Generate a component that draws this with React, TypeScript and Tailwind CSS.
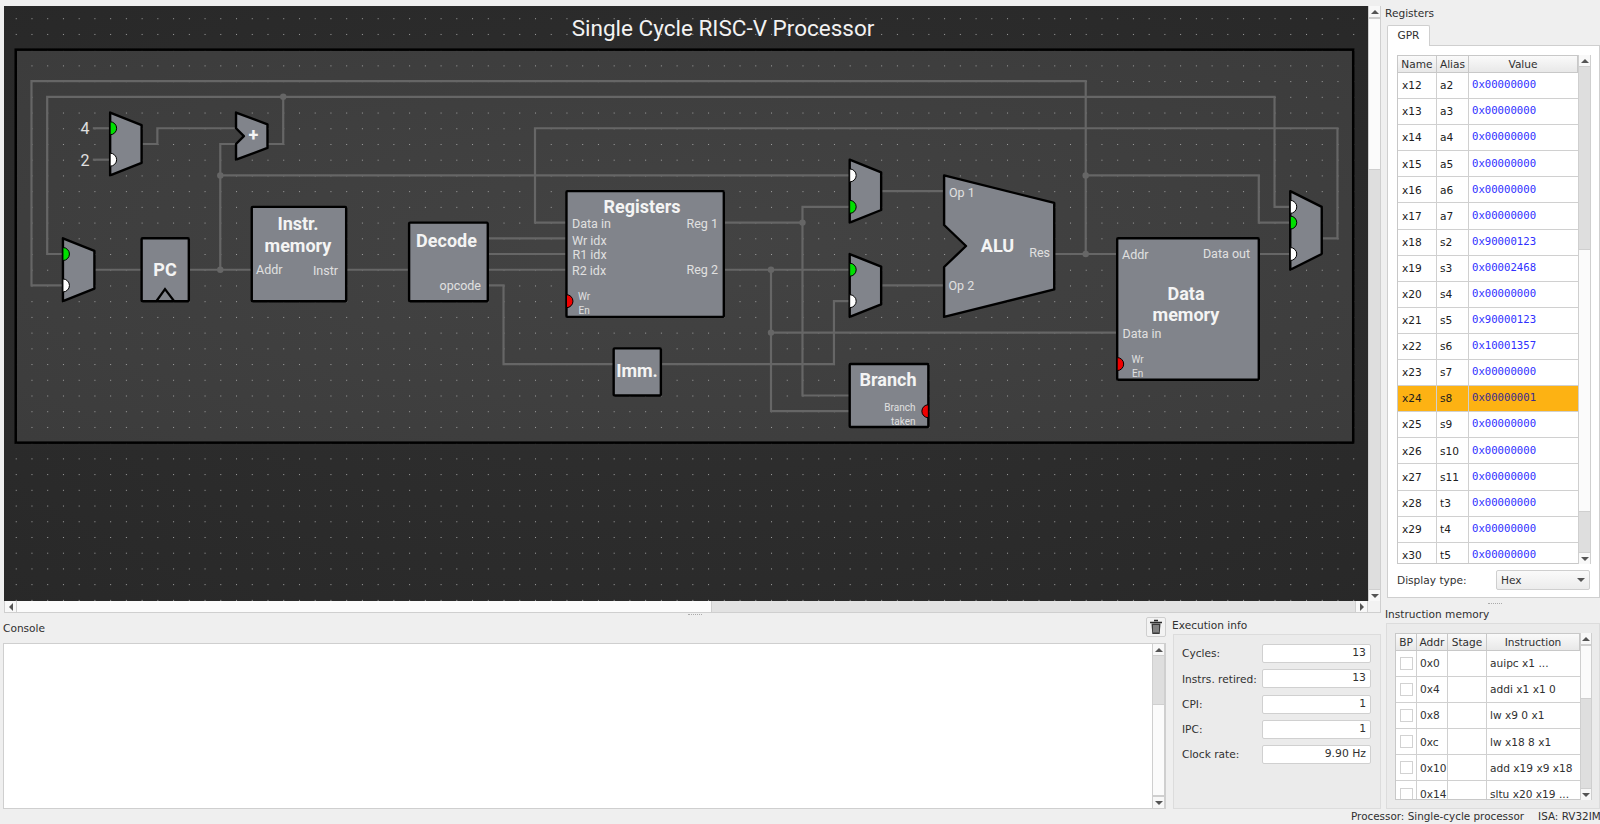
import React from "react";

const GX = 15.735;
const GY = 15.72;
const X = (n: number) => n * GX;
const Y = (n: number) => n * GY + 2.5;

const wires: [number, number][][] = [
  [[4, 18], [2, 18], [2, 5], [69, 5], [69, 16]],
  [[4, 16], [3, 16], [3, 6], [81, 6], [81, 13], [82, 13]],
  [[18, 6], [18, 9], [17, 9]],
  [[9, 9], [10, 9], [10, 8], [15.4, 8]],
  [[15.4, 9], [14, 9], [14, 17]],
  [[6, 17], [9, 17]],
  [[12, 17], [16, 17]],
  [[22, 17], [26, 17]],
  [[14, 11], [54, 11]],
  [[31, 15], [36, 15]],
  [[31, 16], [36, 16]],
  [[31, 17], [36, 17]],
  [[31, 18], [32, 18], [32, 23], [39, 23]],
  [[42, 23], [53, 23], [53, 19], [54, 19]],
  [[36, 14], [34, 14], [34, 8], [85, 8], [85, 15], [84, 15]],
  [[46, 14], [51, 14]],
  [[54, 13], [51, 13], [51, 25], [54, 25]],
  [[46, 17], [54, 17]],
  [[49, 17], [49, 26], [54, 26]],
  [[49, 21], [71, 21]],
  [[56, 12], [60, 12]],
  [[56, 18], [60, 18]],
  [[67, 16], [71, 16]],
  [[69, 11], [80, 11], [80, 14], [82, 14]],
  [[80, 16], [82, 16]],
  [[5.9, 8], [7, 8]],
  [[5.9, 10], [7, 10]],
];

const junctions: [number, number][] = [
  [18, 6], [14, 11], [14, 17], [51, 14], [49, 17], [49, 21], [69, 11], [69, 16],
];

const toPts = (w: [number, number][]) => w.map(([a, b]) => `${X(a)},${Y(b)}`).join(" ");

function Mux({ x, y, h }: { x: number; y: number; h: number }) {
  const i = h * 0.2;
  return (
    <polygon
      points={`${X(x)},${Y(y)} ${X(x + 2)},${Y(y + i)} ${X(x + 2)},${Y(y + h - i)} ${X(x)},${Y(y + h)}`}
      fill="#81848b"
      stroke="#000"
      strokeWidth="2.4"
      strokeLinejoin="round"
    />
  );
}

function Block({ x1, y1, x2, y2 }: { x1: number; y1: number; x2: number; y2: number }) {
  return (
    <rect x={X(x1)} y={Y(y1)} width={X(x2) - X(x1)} height={Y(y2) - Y(y1)} fill="#81848b" stroke="#000" strokeWidth="2.4" rx="1" />
  );
}

function Port({ x, y, c, flip }: { x: number; y: number; c: string; flip?: boolean }) {
  const r = 6.5;
  const px = X(x);
  const py = Y(y);
  return (
    <path d={`M${px},${py - r} A${r},${r} 0 0 ${flip ? 0 : 1} ${px},${py + r} Z`} fill={c} stroke="#000" strokeWidth="1" />
  );
}

function L({ x, y, s = 12.5, a = "start", b, children }: { x: number; y: number; s?: number; a?: "start" | "middle" | "end"; b?: boolean; children: React.ReactNode }) {
  return (
    <text x={x} y={y} fontSize={s} textAnchor={a} fontWeight={b ? 700 : 400} fill={b ? "#f4f4f4" : "#e0e0e0"} fontFamily="Roboto, sans-serif">
      {children}
    </text>
  );
}

function Diagram() {
  return (
    <svg width="1364" height="595" viewBox="4 6 1364 595" className="block">
      <defs>
        <radialGradient id="outer" cx="50%" cy="50%" r="75%">
          <stop offset="0%" stopColor="#303030" />
          <stop offset="100%" stopColor="#282828" />
        </radialGradient>
        <radialGradient id="inner" cx="50%" cy="50%" r="70%">
          <stop offset="0%" stopColor="#434343" />
          <stop offset="100%" stopColor="#3c3c3c" />
        </radialGradient>
        <pattern id="dots" patternUnits="userSpaceOnUse" x="0" y="2.5" width={GX} height={GY}>
          <rect x="0" y="0" width="1" height="1" fill="#a0a0a0" />
        </pattern>
      </defs>
      <rect x="4" y="6" width="1364" height="595" fill="url(#outer)" />
      <rect x={X(1)} y={Y(3)} width={X(86) - X(1)} height={Y(28) - Y(3)} fill="url(#inner)" />
      <rect x="4" y="6" width="1364" height="595" fill="url(#dots)" />
      <rect x={X(1)} y={Y(3)} width={X(86) - X(1)} height={Y(28) - Y(3)} fill="none" stroke="#000" strokeWidth="2.5" />

      <text x="723" y="35.5" fontSize="22.5" textAnchor="middle" fill="#f2f2f2" fontFamily="Roboto, sans-serif">
        Single Cycle RISC-V Processor
      </text>

      {wires.map((w, i) => (
        <polyline key={i} points={toPts(w)} fill="none" stroke="#666666" strokeWidth="2.2" />
      ))}
      {junctions.map(([a, b], i) => (
        <circle key={i} cx={X(a)} cy={Y(b)} r="3.2" fill="#666666" />
      ))}

      <L x={85} y={134} s={16} a="middle">4</L>
      <L x={85} y={165.5} s={16} a="middle">2</L>

      <Mux x={7} y={7} h={4} />
      <Port x={7} y={8} c="#00e000" />
      <Port x={7} y={10} c="#ffffff" />

      <Mux x={4} y={15} h={4} />
      <Port x={4} y={16} c="#00e000" />
      <Port x={4} y={18} c="#ffffff" />

      <polygon
        points={`${X(15)},${Y(7)} ${X(17)},${Y(7.75)} ${X(17)},${Y(9.25)} ${X(15)},${Y(10)} ${X(15)},${Y(9)} ${X(15.5)},${Y(8.5)} ${X(15)},${Y(8)}`}
        fill="#81848b"
        stroke="#000"
        strokeWidth="2.4"
        strokeLinejoin="round"
      />
      <L x={253.5} y={141} s={18} a="middle" b>+</L>

      <Block x1={9} y1={15} x2={12} y2={19} />
      <polyline points={`156.5,301 165,289 174,301`} fill="none" stroke="#000" strokeWidth="2.2" />
      <L x={165} y={276} s={18} a="middle" b>PC</L>

      <Block x1={16} y1={13} x2={22} y2={19} />
      <L x={298} y={230} s={18} a="middle" b>Instr.</L>
      <L x={298} y={252} s={18} a="middle" b>memory</L>
      <L x={256} y={274}>Addr</L>
      <L x={338} y={275} a="end">Instr</L>

      <Block x1={26} y1={14} x2={31} y2={19} />
      <L x={446.5} y={246.5} s={18} a="middle" b>Decode</L>
      <L x={481} y={290} a="end">opcode</L>

      <Block x1={36} y1={12} x2={46} y2={20} />
      <L x={642} y={213} s={18} a="middle" b>Registers</L>
      <L x={572} y={228}>Data in</L>
      <L x={572} y={244.5}>Wr idx</L>
      <L x={572.5} y={259}>R1 idx</L>
      <L x={572} y={275}>R2 idx</L>
      <L x={718} y={228} a="end">Reg 1</L>
      <L x={718} y={274} a="end">Reg 2</L>
      <L x={578} y={300} s={10}>Wr</L>
      <L x={578.5} y={314} s={10}>En</L>
      <Port x={36} y={19} c="#f00000" />

      <Block x1={39} y1={22} x2={42} y2={25} />
      <L x={637} y={376.5} s={18} a="middle" b>Imm.</L>

      <Mux x={54} y={10} h={4} />
      <Port x={54} y={11} c="#ffffff" />
      <Port x={54} y={13} c="#00e000" />

      <Mux x={54} y={16} h={4} />
      <Port x={54} y={17} c="#00e000" />
      <Port x={54} y={19} c="#ffffff" />

      <Block x1={54} y1={23} x2={59} y2={27} />
      <L x={888} y={386} s={18} a="middle" b>Branch</L>
      <L x={915.5} y={410.5} s={10} a="end">Branch</L>
      <L x={915.5} y={425} s={10} a="end">taken</L>
      <Port x={59} y={26} c="#f00000" flip />

      <polygon
        points={`${X(60)},${Y(11)} ${X(67)},${Y(12.75)} ${X(67)},${Y(18.25)} ${X(60)},${Y(20)} ${X(60)},267 966,246 ${X(60)},225`}
        fill="#81848b"
        stroke="#000"
        strokeWidth="2.4"
        strokeLinejoin="round"
      />
      <L x={997.5} y={252} s={18} a="middle" b>ALU</L>
      <L x={949} y={197}>Op 1</L>
      <L x={948.5} y={290}>Op 2</L>
      <L x={1050} y={257} a="end">Res</L>

      <Block x1={71} y1={15} x2={80} y2={24} />
      <L x={1186} y={300} s={18} a="middle" b>Data</L>
      <L x={1186} y={321} s={18} a="middle" b>memory</L>
      <L x={1122} y={259}>Addr</L>
      <L x={1250} y={258} a="end">Data out</L>
      <L x={1122.5} y={338}>Data in</L>
      <L x={1131.5} y={363} s={10}>Wr</L>
      <L x={1132} y={377} s={10}>En</L>
      <Port x={71} y={23} c="#f00000" />

      <Mux x={82} y={12} h={5} />
      <Port x={82} y={13} c="#ffffff" />
      <Port x={82} y={14} c="#00e000" />
      <Port x={82} y={16} c="#ffffff" />
    </svg>
  );
}

function Tri({ d }: { d: "up" | "down" | "left" | "right" }) {
  const p = { up: "0,6 4,2 8,6", down: "0,2 8,2 4,6", left: "6,0 6,8 2,4", right: "2,0 2,8 6,4" }[d];
  return (
    <svg width="8" height="8" viewBox="0 0 8 8" className="block">
      <polygon points={p} fill="#555" />
    </svg>
  );
}

const btnCls = "flex items-center justify-center bg-[#f8f8f8] border-[#cfcfcf] shrink-0";

function VScroll({ before, handle, after, w = "w-[13px]" }: { before: number; handle: number; after: number; w?: string }) {
  return (
    <div className={`${w} h-full shrink-0 flex flex-col border-x border-[#cfcfcf] bg-[#dedede]`}>
      <div className={`${btnCls} h-[12px] border-b`}><Tri d="up" /></div>
      <div className="shrink-0" style={{ height: before }} />
      <div className="bg-[#fbfbfb] border-y border-[#cfcfcf] shrink-0" style={{ height: handle }} />
      <div className="flex-1" style={{ minHeight: after }} />
      <div className={`${btnCls} h-[12px] border-t`}><Tri d="down" /></div>
    </div>
  );
}

const regs: [string, string, string][] = [
  ["x12", "a2", "0x00000000"],
  ["x13", "a3", "0x00000000"],
  ["x14", "a4", "0x00000000"],
  ["x15", "a5", "0x00000000"],
  ["x16", "a6", "0x00000000"],
  ["x17", "a7", "0x00000000"],
  ["x18", "s2", "0x90000123"],
  ["x19", "s3", "0x00002468"],
  ["x20", "s4", "0x00000000"],
  ["x21", "s5", "0x90000123"],
  ["x22", "s6", "0x10001357"],
  ["x23", "s7", "0x00000000"],
  ["x24", "s8", "0x00000001"],
  ["x25", "s9", "0x00000000"],
  ["x26", "s10", "0x00000000"],
  ["x27", "s11", "0x00000000"],
  ["x28", "t3", "0x00000000"],
  ["x29", "t4", "0x00000000"],
  ["x30", "t5", "0x00000000"],
];

const instrs: [string, string][] = [
  ["0x0", "auipc x1 ..."],
  ["0x4", "addi x1 x1 0"],
  ["0x8", "lw x9 0 x1"],
  ["0xc", "lw x18 8 x1"],
  ["0x10", "add x19 x9 x18"],
  ["0x14", "sltu x20 x19 ..."],
];

const headCls = "h-[17px] flex items-center justify-center bg-gradient-to-b from-[#fafafa] to-[#e8e8e8] border-r border-b border-[#c8c8c8] text-[#303030] shrink-0";

function RegisterTable() {
  return (
    <div className="flex h-[509px]">
      <div className="w-[181px] h-full overflow-hidden border-[#c8c8c8] border-y border-l bg-white">
        <div className="flex">
          <div className={`${headCls} w-[39px]`}>Name</div>
          <div className={`${headCls} w-[32px]`}>Alias</div>
          <div className={`${headCls} flex-1`}>Value</div>
        </div>
        {regs.map(([n, a, v]) => {
          const on = n === "x24";
          return (
            <div key={n} className={`flex h-[26.1px] border-b border-[#d0d0d0] ${on ? "bg-[#fdb213]" : "bg-white"}`}>
              <div className="w-[39px] pl-[4px] flex items-center border-r border-[#d0d0d0] text-[#202020] shrink-0">{n}</div>
              <div className="w-[32px] pl-[3px] flex items-center border-r border-[#d0d0d0] text-[#202020] shrink-0">{a}</div>
              <div className={`flex-1 pl-[3px] flex items-center font-['DejaVu_Sans_Mono',monospace] text-[10.65px] ${on ? "text-[#3a2a90]" : "text-[#3030ff]"}`}>{v}</div>
            </div>
          );
        })}
      </div>
      <VScroll before={182} handle={263} after={30} />
    </div>
  );
}

function InstrTable() {
  return (
    <div className="flex h-[167px]">
      <div className="w-[185px] h-full overflow-hidden border-[#c8c8c8] border-y border-l bg-white">
        <div className="flex">
          <div className={`${headCls} w-[21px]`}>BP</div>
          <div className={`${headCls} w-[31px]`}>Addr</div>
          <div className={`${headCls} w-[39px]`}>Stage</div>
          <div className={`${headCls} flex-1`}>Instruction</div>
        </div>
        {instrs.map(([a, t]) => (
          <div key={a} className="flex h-[26.1px] border-b border-[#d0d0d0] bg-white text-[#303030]">
            <div className="w-[21px] flex items-center justify-center border-r border-[#d0d0d0] shrink-0">
              <div className="w-[13px] h-[13px] border border-[#d2d2d2] bg-white" />
            </div>
            <div className="w-[31px] pl-[3px] flex items-center border-r border-[#d0d0d0] shrink-0">{a}</div>
            <div className="w-[39px] border-r border-[#d0d0d0] shrink-0" />
            <div className="flex-1 pl-[3px] flex items-center whitespace-nowrap">{t}</div>
          </div>
        ))}
      </div>
      <VScroll before={0} handle={54} after={40} w="w-[12px]" />
    </div>
  );
}

function Trash() {
  return (
    <svg width="14" height="16" viewBox="0 0 14 16" className="block">
      <path d="M5 1.5h4M1 3.5h12" stroke="#2a2a2a" strokeWidth="1.6" fill="none" />
      <path d="M2.5 4.5l.8 10.5h7.4l.8-10.5z" fill="#3a3a3a" />
      <path d="M5 6v7.5M7 6v7.5M9 6v7.5" stroke="#d8d8d8" strokeWidth="0.9" />
    </svg>
  );
}

const stats: [string, string][] = [
  ["Cycles:", "13"],
  ["Instrs. retired:", "13"],
  ["CPI:", "1"],
  ["IPC:", "1"],
  ["Clock rate:", "9.90 Hz"],
];

export default function App() {
  return (
    <div className="w-[1600px] h-[824px] overflow-hidden bg-[#efefef] flex flex-col font-['DejaVu_Sans',sans-serif] text-[10.6px] text-[#303030] leading-none">
      <div className="h-[809px] flex shrink-0">
        <div className="w-[1381px] pl-[4px] pt-[6px] flex flex-col shrink-0">
          <div className="flex h-[595px] shrink-0">
            <Diagram />
            <VScroll before={0} handle={152} after={0} />
          </div>
          <div className="flex h-[12px] shrink-0 border-b border-[#cfcfcf] bg-[#e2e2e2]">
            <div className={`${btnCls} w-[13px] border-x`}><Tri d="left" /></div>
            <div className="w-[695px] bg-[#fbfbfb] border-r border-[#cfcfcf]" />
            <div className="flex-1" />
            <div className={`${btnCls} w-[13px] border-x`}><Tri d="right" /></div>
            <div className="w-[13px] bg-[#f2f2f2] border-r border-[#cfcfcf]" />
          </div>
          <div className="flex flex-1 relative">
            <div className="absolute left-[684px] top-[1px] w-[14px] h-[1px] border-t border-dotted border-[#aaaaaa]" />
            <div className="w-[1163px] flex flex-col shrink-0 -ml-[1px]">
              <div className="h-[30px] flex items-end justify-between shrink-0 pb-[6px]">
                <span className="pb-[3px]">Console</span>
                <div className="w-[20px] h-[20px] flex items-center justify-center border border-[#cfcfcf] rounded-[2px] bg-[#f3f3f3]">
                  <Trash />
                </div>
              </div>
              <div className="h-[166px] flex border border-[#cfcfcf] bg-white justify-end">
                <VScroll before={48} handle={92} after={0} />
              </div>
            </div>
            <div className="w-[210px] ml-[6px] flex flex-col">
              <div className="h-[21px] flex items-center shrink-0 pt-[3px]">Execution info</div>
              <div className="h-[175px] ml-[1px] pt-[9px] flex flex-col gap-[6.3px] border border-[#dcdcdc] bg-[#ebebeb]">
                {stats.map(([k, v]) => (
                  <div key={k} className="flex items-center h-[19px] pl-[8px] pr-[9px] justify-between">
                    <span>{k}</span>
                    <div className="w-[109px] h-[19px] flex items-center justify-end pr-[4px] bg-white border border-[#d0d0d0] rounded-[2px] text-[10.8px]">{v}</div>
                  </div>
                ))}
              </div>
            </div>
          </div>
        </div>
        <div className="ml-[4px] flex-1 flex flex-col">
          <div className="h-[24px] flex items-center shrink-0 pt-[2px]">Registers</div>
          <div className="h-[21px] w-[43px] ml-[2px] pb-[2px] flex items-center justify-center bg-white border-x border-t border-[#cfcfcf] rounded-t-[2px] shrink-0 relative top-[1px]">GPR</div>
          <div className="h-[553px] ml-[2px] bg-white border border-[#cfcfcf] pl-[9px] pt-[9px] flex flex-col shrink-0">
            <RegisterTable />
            <div className="flex items-center mt-[6px] h-[20px]">
              <span className="w-[99px]">Display type:</span>
              <div className="w-[94px] h-[20px] flex items-center justify-between px-[4px] border border-[#cfcfcf] rounded-[2px] bg-gradient-to-b from-[#fafafa] to-[#ececec]">
                <span>Hex</span>
                <Tri d="down" />
              </div>
            </div>
          </div>
          <div className="h-[25px] relative flex items-end shrink-0 pb-[3px]">
            <div className="absolute left-[103px] top-[5px] w-[14px] h-[1px] border-t border-dotted border-[#aaaaaa]" />
            Instruction memory
          </div>
          <div className="h-[186px] ml-[1px] bg-[#ebebeb] border border-[#dcdcdc] pl-[8px] pt-[9px]">
            <InstrTable />
          </div>
        </div>
      </div>
      <div className="h-[15px] pl-[1351px] flex items-center whitespace-nowrap overflow-hidden gap-[14px] shrink-0 text-[10.4px]">
        <span>Processor: Single-cycle processor</span>
        <span>ISA: RV32IM</span>
      </div>
    </div>
  );
}
